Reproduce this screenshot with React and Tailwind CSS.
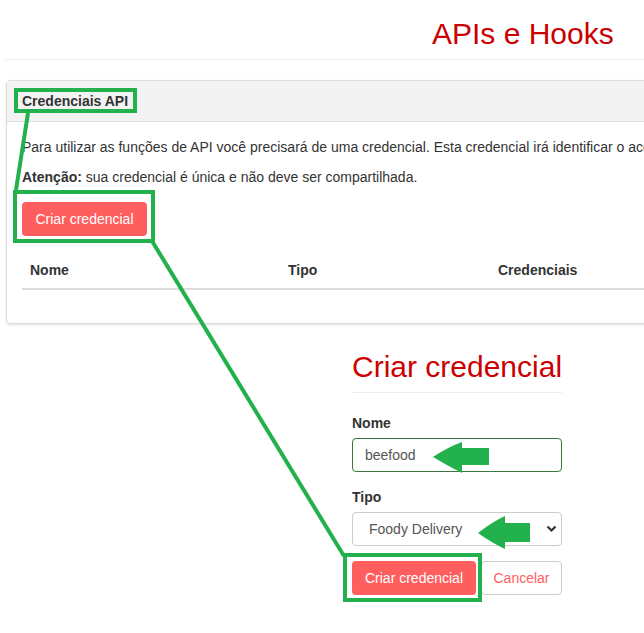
import React from 'react';

const green = '#22b14c';

// green tutorial marks drawn over the page
function Annotations() {
  return (
    <svg className="absolute inset-0 pointer-events-none" width="644" height="633" viewBox="0 0 644 633">
      <g fill="none" stroke={green} strokeWidth="4">
        <rect x="16" y="90" width="119" height="21" />
        <rect x="15" y="192" width="138" height="49" />
        <rect x="345" y="555" width="135" height="45" />
        <line x1="28" y1="113" x2="16" y2="190" />
        <line x1="152" y1="241" x2="344" y2="556" />
      </g>
      <g fill={green}>
        <path d="M433 457 Q448 447 462 442 L462 448 L489 448 L489 465 L462 465 L462 473 Q448 466 433 457 Z" />
        <path d="M478 533 Q492 522 505 516 L505 523 L530 523 L530 542 L505 542 L505 549 Q492 543 478 533 Z" />
      </g>
    </svg>
  );
}

export default function App() {
  return (
    <div className="relative w-[644px] h-[633px] overflow-hidden bg-white font-['Liberation_Sans',Arial,sans-serif] text-[14px] leading-[20px] text-[#333]">
      {/* Page title */}
      <div className="pt-[17px] pl-[432px]">
        <h1 className="text-[30px] leading-[33px] font-normal text-[#cc0000] whitespace-nowrap">APIs e Hooks</h1>
      </div>
      <div className="mt-[9px] ml-[5px] border-t border-[#eee]" />

      {/* Credentials panel */}
      <div className="mt-[20px] ml-[6px] w-[720px] border border-[#ddd] rounded shadow-sm">
        <div className="bg-[#f3f3f3] border-b border-[#ddd] px-[15px] py-[10px] font-bold">Credenciais API</div>
        <div className="p-[15px]">
          <p className="mb-[10px] whitespace-nowrap">
            Para utilizar as funções de API você precisará de uma credencial. Esta credencial irá identificar o acesso da sua aplicação.
          </p>
          <p className="mb-[15px]">
            <strong>Atenção:</strong> sua credencial é única e não deve ser compartilhada.
          </p>
          <button className="h-[34px] w-[125px] rounded bg-[#ff5e5e] text-white">Criar credencial</button>

          <div className="mt-[16px] mb-[18px] grid grid-cols-[258px_210px_1fr] border-b-2 border-[#ddd] font-bold">
            <div className="p-[8px]">Nome</div>
            <div className="p-[8px]">Tipo</div>
            <div className="p-[8px]">Credenciais</div>
          </div>
        </div>
      </div>

      {/* New credential form */}
      <div className="mt-[26px] ml-[352px] w-[210px]">
        <h2 className="text-[30px] leading-[33px] font-normal text-[#cc0000] whitespace-nowrap">Criar credencial</h2>
        <div className="mt-[9px] border-t border-[#eee]" />

        <label className="block mt-[20px] mb-[5px] font-bold">Nome</label>
        <input
          readOnly
          value="beefood"
          className="block w-full h-[34px] px-[12px] border border-[#3c763d] rounded text-[#555] outline-none"
        />

        <label className="block mt-[15px] mb-[5px] font-bold">Tipo</label>
        <div className="flex items-center justify-between h-[34px] pl-[16px] pr-[4px] border border-[#ccc] rounded text-[#555]">
          <span>Foody Delivery</span>
          <svg width="11" height="8" viewBox="0 0 11 8">
            <path d="M1.5 1.5 L5.5 5.5 L9.5 1.5" fill="none" stroke="#333" strokeWidth="2.2" />
          </svg>
        </div>

        <div className="mt-[15px] flex gap-[5px]">
          <button className="h-[34px] w-[124px] rounded bg-[#ff5e5e] text-white">Criar credencial</button>
          <button className="h-[34px] w-[81px] rounded bg-white border border-[#ccc] text-[#ff5e5e]">Cancelar</button>
        </div>
      </div>

      <Annotations />
    </div>
  );
}
